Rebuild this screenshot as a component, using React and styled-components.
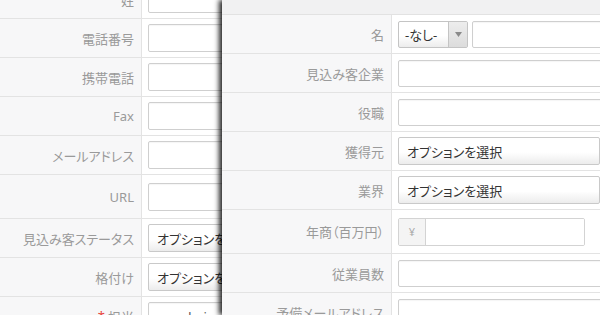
// Imports
import React from "react";
import styled, { createGlobalStyle } from "styled-components";

// Data
const backRows = [
	{ label: "姓", kind: "input" },
	{ label: "電話番号", kind: "input" },
	{ label: "携帯電話", kind: "input" },
	{ label: "Fax", kind: "input" },
	{ label: "メールアドレス", kind: "input" },
	{ label: "URL", kind: "input", tall: true },
	{ label: "見込み客ステータス", kind: "select" },
	{ label: "格付け", kind: "select" },
	{ label: "担当", kind: "owner", required: true },
];

// Arrow
const Caret = () => (
	<svg width="7" height="5" viewBox="0 0 7 5">
		<path d="M0 0 H7 L3.5 5 Z" fill="#8a8a8a"/>
	</svg>
);

// Back field
const BackField = ({ row }) => {
	if (row.kind === "select") return <BackSelect>オプションを選択</BackSelect>;
	if (row.kind === "owner") return <TextBox $h={ 28 } $w={ 200 }>sysadmin</TextBox>;
	return <TextBox $h={ 28 } $w={ 200 }/>;
};

// Component
const App = () => {
	return(
		<>
			<GlobalStyle/>
			<Stage>
				<BackForm>
					{ backRows.map((row) => (
						<Row key={ row.label } $tall={ row.tall }>
							<Label $width={ 142 }>
								{ row.required && <Star>*</Star> }
								{ row.label }
							</Label>
							<Field><BackField row={ row }/></Field>
						</Row>
					)) }
				</BackForm>
				<Drawer>
					<DrawerHeader/>
					<Row>
						<Label $width={ 170 }>名</Label>
						<Field>
							<Salutation>
								<span>-なし-</span>
								<CaretBox><Caret/></CaretBox>
							</Salutation>
							<TextBox $h={ 27 } $w={ 160 }/>
						</Field>
					</Row>
					<Row>
						<Label $width={ 170 }>見込み客企業</Label>
						<Field><TextBox $h={ 27 } $w={ 220 }/></Field>
					</Row>
					<Row>
						<Label $width={ 170 }>役職</Label>
						<Field><TextBox $h={ 27 } $w={ 220 }/></Field>
					</Row>
					<Row>
						<Label $width={ 170 }>獲得元</Label>
						<Field><Select>オプションを選択</Select></Field>
					</Row>
					<Row>
						<Label $width={ 170 }>業界</Label>
						<Field><Select>オプションを選択</Select></Field>
					</Row>
					<Row $tall>
						<Label $width={ 170 }>年商（百万円）</Label>
						<Field>
							<Group>
								<Addon>¥</Addon>
								<GroupInput/>
							</Group>
						</Field>
					</Row>
					<Row>
						<Label $width={ 170 }>従業員数</Label>
						<Field><TextBox $h={ 27 } $w={ 220 }/></Field>
					</Row>
					<Row>
						<Label $width={ 170 }>予備メールアドレス</Label>
						<Field><TextBox $h={ 27 } $w={ 220 }/></Field>
					</Row>
				</Drawer>
			</Stage>
		</>
	);
};

// Styled
const GlobalStyle = createGlobalStyle`
	html, body {
		margin: 0;
		padding: 0;
		background: #ffffff;
	}
	body {
		font-family: "Noto Sans", "Noto Sans CJK JP", sans-serif;
		font-feature-settings: "palt";
	}
`;

const Stage = styled.div`
	display: flex;
	width: 600px;
	height: 315px;
	overflow: hidden;
	background: #ffffff;
`;

const BackForm = styled.div`
	display: flex;
	flex-direction: column;
	flex: 0 0 222px;
	margin-top: -20px;
	overflow: hidden;
`;

const Drawer = styled.div`
	display: flex;
	flex-direction: column;
	flex: 1;
	min-width: 0;
	position: relative;
	z-index: 2;
	background: #ffffff;
	box-shadow: -3px 0 5px rgba(0, 0, 0, 0.85);
	overflow: hidden;
`;

const DrawerHeader = styled.div`
	flex: 0 0 15px;
	box-sizing: border-box;
	background: #f1f1f2;
	border-bottom: 1px solid #e2e2e2;
`;

const Row = styled.div`
	display: flex;
	flex: 0 0 ${ (p) => p.$tall ? 44 : 39 }px;
	box-sizing: border-box;
	border-bottom: 1px solid #e3e3e3;
`;

const Label = styled.div`
	display: flex;
	align-items: center;
	justify-content: flex-end;
	flex: 0 0 ${ (p) => p.$width }px;
	box-sizing: border-box;
	padding-right: 7px;
	background: #f7f7f8;
	border-right: 1px solid #e3e3e3;
	color: #9a9a9a;
	font-size: 13px;
	white-space: nowrap;
`;

const Star = styled.span`
	color: #e8453c;
	margin-right: 3px;
	font-size: 13px;
`;

const Field = styled.div`
	display: flex;
	align-items: center;
	gap: 4px;
	flex: 1;
	padding-left: 6px;
	background: #ffffff;
	white-space: nowrap;
`;

const TextBox = styled.div`
	display: flex;
	align-items: center;
	flex: 0 0 auto;
	box-sizing: border-box;
	width: ${ (p) => p.$w }px;
	height: ${ (p) => p.$h }px;
	padding: 2px 0 0 8px;
	background: #ffffff;
	border: 1px solid #cfcfcf;
	border-radius: 2px;
	box-shadow: inset 0 1px 1px rgba(0, 0, 0, 0.04);
	color: #555555;
	font-size: 13px;
`;

const Select = styled.div`
	display: flex;
	align-items: center;
	flex: 0 0 auto;
	box-sizing: border-box;
	width: 202px;
	height: 28px;
	padding-left: 8px;
	background: linear-gradient(#ffffff, #ffffff 55%, #ececec);
	border: 1px solid #c9c9c9;
	border-radius: 2px;
	color: #333333;
	font-size: 13px;
`;

const BackSelect = styled(Select)`
	width: 200px;
`;

const Salutation = styled.div`
	display: flex;
	align-items: stretch;
	flex: 0 0 auto;
	box-sizing: border-box;
	width: 70px;
	height: 27px;
	background: linear-gradient(#ffffff, #ffffff 55%, #ececec);
	border: 1px solid #c4c4c4;
	border-radius: 2px;
	color: #333333;
	font-size: 13px;
	span {
		display: flex;
		align-items: center;
		flex: 1;
		padding-left: 6px;
	}
`;

const CaretBox = styled.div`
	display: flex;
	align-items: center;
	justify-content: center;
	flex: 0 0 18px;
	background: linear-gradient(#ededed, #dcdcdc);
	border-left: 1px solid #c4c4c4;
`;

const Group = styled.div`
	display: flex;
	box-sizing: border-box;
	width: 187px;
	height: 28px;
	border: 1px solid #d3d3d3;
	border-radius: 2px;
	overflow: hidden;
`;

const Addon = styled.div`
	display: flex;
	align-items: center;
	justify-content: center;
	flex: 0 0 26px;
	background: #f4f4f4;
	border-right: 1px solid #d3d3d3;
	color: #a9a9a9;
	font-size: 11px;
`;

const GroupInput = styled.div`
	flex: 1;
	background: #ffffff;
`;

// Export
export default App;
